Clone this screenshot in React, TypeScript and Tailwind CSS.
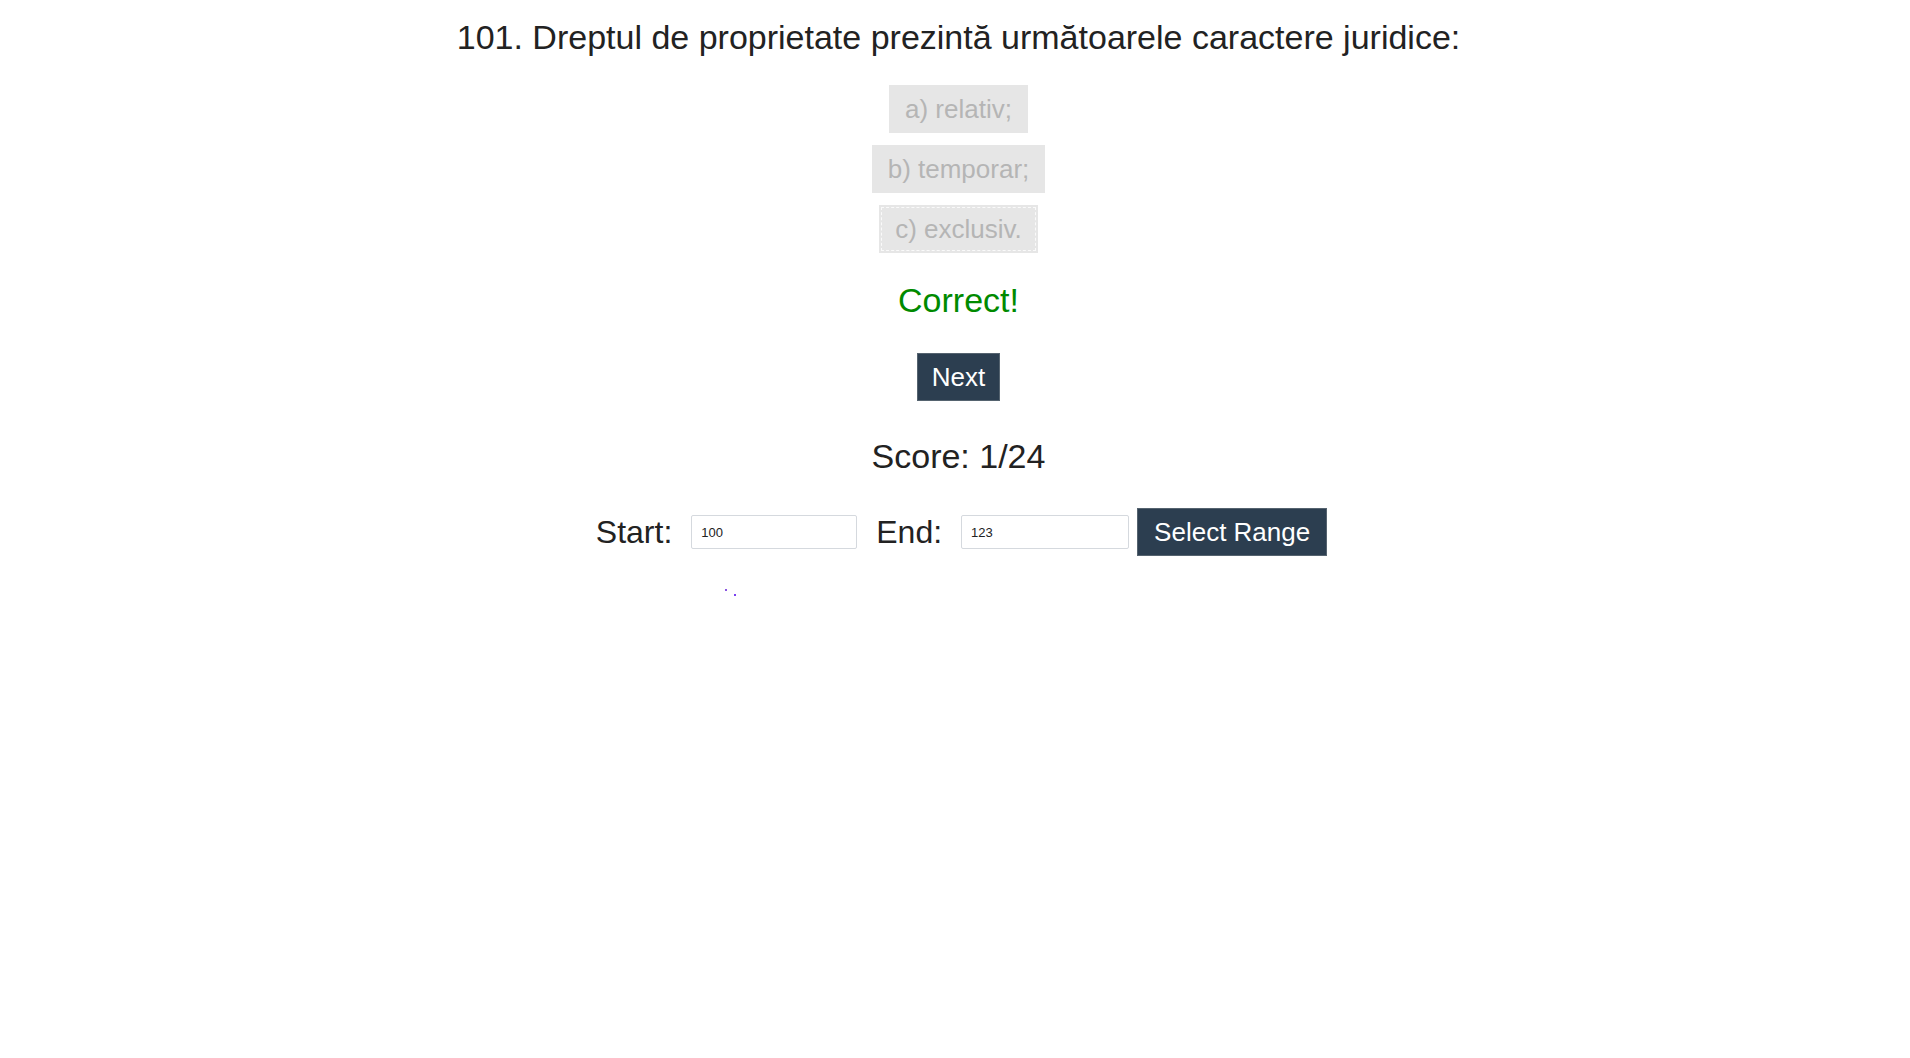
import React from "react";

export default function App() {
  const font = { fontFamily: '"Liberation Sans", Arial, sans-serif' } as React.CSSProperties;
  return (
    <div className="min-h-screen w-full bg-white text-[#222]" style={font}>
      <div className="flex flex-col items-center pl-[7px]">
        <h1 className="mt-[18px] text-[34px] leading-[39px] font-normal">
          101. Dreptul de proprietate prezintă următoarele caractere juridice:
        </h1>
        <div className="mt-[28px] flex flex-col items-center gap-[12px]">
          <div className="bg-[#e6e6e6] text-[#b5b5b5] text-[26px] leading-[30px] px-[16px] py-[9px]">
            a) relativ;
          </div>
          <div className="bg-[#e6e6e6] text-[#b5b5b5] text-[26px] leading-[30px] px-[16px] py-[9px]">
            b) temporar;
          </div>
          <div className="bg-[#e6e6e6] text-[#b5b5b5] text-[26px] leading-[30px] px-[16px] py-[9px] outline-1 outline-dashed outline-[#fafafa] -outline-offset-[3px]">
            c) exclusiv.
          </div>
        </div>
        <div className="mt-[28px] text-[34px] leading-[39px] text-[#008a00]">Correct!</div>
        <button className="mt-[33px] bg-[#2c3e50] text-white text-[26px] leading-[30px] px-[14px] py-[8px] border border-[#55636f]">
          Next
        </button>
        <div className="mt-[36px] text-[34px] leading-[39px]">Score: 1/24</div>
        <div className="mt-[32px] flex items-center pl-[6px]">
          <span className="text-[32px] leading-[37px]">Start:</span>
          <input
            defaultValue="100"
            className="ml-[19px] w-[166px] h-[34px] border border-[#d5d9de] rounded-[2px] px-[9px] text-[13px] text-[#222] outline-none"
            style={font}
          />
          <span className="ml-[19px] text-[32px] leading-[37px]">End:</span>
          <input
            defaultValue="123"
            className="ml-[19px] w-[168px] h-[34px] border border-[#d5d9de] rounded-[2px] px-[9px] text-[13px] text-[#222] outline-none"
            style={font}
          />
          <button className="ml-[8px] bg-[#2c3e50] text-white text-[26px] leading-[30px] px-[16px] py-[8px] border border-[#55636f]">
            Select Range
          </button>
        </div>
        <div className="relative w-full h-[60px]">
          <span className="absolute left-[718px] top-[33px] w-[2px] h-[2px] bg-[#8a55e0]" />
          <span className="absolute left-[727px] top-[38px] w-[2px] h-[2px] bg-[#7a3ff0]" />
        </div>
      </div>
    </div>
  );
}
